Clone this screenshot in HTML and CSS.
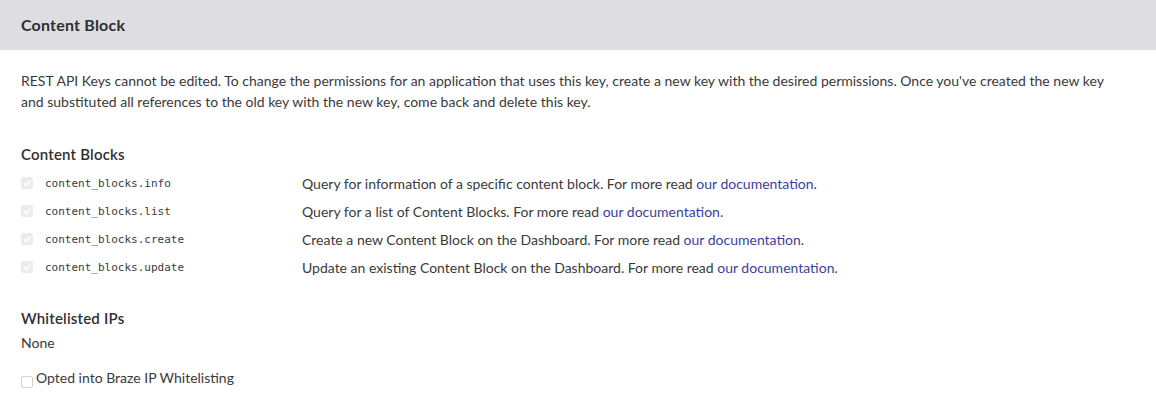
FILE: index.html
```html
<!DOCTYPE html>
<html>
<head>
<meta charset="utf-8">
<link rel="stylesheet" href="styles.css">
</head>
<body>
<div class="header"><h1 class="title">Content Block</h1></div>
<div class="content">
  <p class="intro">REST API Keys cannot be edited. To change the permissions for an application that uses this key, create a new key with the desired permissions. Once you've created the new key and substituted all references to the old key with the new key, come back and delete this key.</p>
  <h2 class="section-title">Content Blocks</h2>
  <div class="perm-list">
    <div class="perm-row">
      <span class="cb checked"><svg viewBox="0 0 12 12" width="12" height="12"><path d="M3 6.2 L5.1 8.3 L9.2 3.8" fill="none" stroke="#fff" stroke-width="1.6"/></svg></span>
      <code class="perm-name">content_blocks.info</code>
      <span class="perm-desc">Query for information of a specific content block. For more read <a class="link">our documentation</a>.</span>
    </div>
    <div class="perm-row">
      <span class="cb checked"><svg viewBox="0 0 12 12" width="12" height="12"><path d="M3 6.2 L5.1 8.3 L9.2 3.8" fill="none" stroke="#fff" stroke-width="1.6"/></svg></span>
      <code class="perm-name">content_blocks.list</code>
      <span class="perm-desc">Query for a list of Content Blocks. For more read <a class="link">our documentation</a>.</span>
    </div>
    <div class="perm-row">
      <span class="cb checked"><svg viewBox="0 0 12 12" width="12" height="12"><path d="M3 6.2 L5.1 8.3 L9.2 3.8" fill="none" stroke="#fff" stroke-width="1.6"/></svg></span>
      <code class="perm-name">content_blocks.create</code>
      <span class="perm-desc">Create a new Content Block on the Dashboard. For more read <a class="link">our documentation</a>.</span>
    </div>
    <div class="perm-row">
      <span class="cb checked"><svg viewBox="0 0 12 12" width="12" height="12"><path d="M3 6.2 L5.1 8.3 L9.2 3.8" fill="none" stroke="#fff" stroke-width="1.6"/></svg></span>
      <code class="perm-name">content_blocks.update</code>
      <span class="perm-desc">Update an existing Content Block on the Dashboard. For more read <a class="link">our documentation</a>.</span>
    </div>
  </div>
  <h2 class="section-title ips">Whitelisted IPs</h2>
  <div class="none">None</div>
  <label class="opt"><span class="cb empty"></span>Opted into Braze IP Whitelisting</label>
</div>
</body>
</html>
```
FILE: styles.css
```css
* { box-sizing: border-box; }
html, body { margin: 0; padding: 0; background: #fff; }
body {
  font-family: "Lato", "Open Sans", sans-serif;
  font-size: 14px;
  color: #3a3a3a;
  width: 1156px;
  height: 403px;
  overflow: hidden;
}
.header {
  background: #dedde2;
  height: 50px;
  padding: 0 21px 2px;
  display: flex;
  align-items: center;
}
.title {
  margin: 0;
  font-size: 16px;
  font-weight: 700;
  letter-spacing: 0.2px;
  color: #2f2f33;
}
.content { padding: 20px 21px 0; }
.intro {
  margin: 0;
  line-height: 21px;
  max-width: 1100px;
}
.section-title {
  margin: 33px 0 0;
  font-size: 15px;
  font-weight: 600;
  letter-spacing: 0.2px;
  color: #2f2f33;
  line-height: 18px;
}
.perm-list { margin-top: 6px; }
.perm-row {
  display: flex;
  align-items: center;
  height: 28px;
}
.cb {
  width: 12px;
  height: 12px;
  border-radius: 2px;
  flex: none;
  display: inline-flex;
}
.cb.checked { background: #ececec; }
.cb.empty { border: 1px solid #d4d4d4; background: #fff; margin-right: 3px; width: 12px; height: 12px; }
.perm-name {
  font-family: "DejaVu Sans Mono", monospace;
  font-size: 11px;
  color: #3a3a3a;
  margin-left: 12px;
  width: 257px;
  flex: none;
}
.link { color: #3a3f9c; text-decoration: none; }
.section-title.ips { margin-top: 28px; }
.none { margin-top: 7px; }
.opt {
  display: flex;
  align-items: flex-end;
  margin-top: 18px;
}
.opt .cb { margin-bottom: -2px; }
```
